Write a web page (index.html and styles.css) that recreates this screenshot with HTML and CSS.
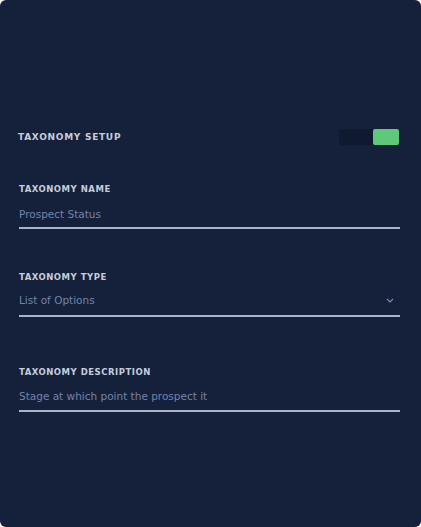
FILE: index.html
```html
<!DOCTYPE html>
<html lang="en">
<head>
    <meta charset="utf-8">
    <link rel="stylesheet" href="styles.css">
</head>
<body>
<div class="panel">
    <div class="setup">
        <h2>Taxonomy Setup</h2>
        <div class="toggle"><span class="off"></span><span class="on"></span></div>
    </div>

    <div class="field name">
        <label>Taxonomy Name</label>
        <div class="value">Prospect Status</div>
    </div>

    <div class="field type">
        <label>Taxonomy Type</label>
        <div class="value">List of Options
            <svg class="chev" width="8" height="5" viewBox="0 0 8 5"><path d="M1 1l3 3 3-3" fill="none" stroke="#7d8cb0" stroke-width="1.2"/></svg>
        </div>
    </div>

    <div class="field desc">
        <label>Taxonomy Description</label>
        <div class="value">Stage at which point the prospect it</div>
    </div>
</div>
</body>
</html>
```
FILE: styles.css
```css
html, body { margin: 0; background: #fff; }
body { font-family: "DejaVu Sans", sans-serif; }

.panel {
    width: 421px;
    height: 527px;
    box-sizing: border-box;
    background: #15213b;
    border-radius: 6px;
    padding: 129px 21px 0 18px;
}

.setup {
    display: flex;
    align-items: center;
    justify-content: space-between;
}
.setup h2 {
    margin: 0;
    font-size: 9px;
    font-weight: bold;
    text-transform: uppercase;
    letter-spacing: 0.08em;
    color: #c7cddb;
}
.toggle {
    display: flex;
    width: 60px;
    height: 16px;
    margin-right: 1px;
}
.toggle .off { flex: 34; background: #0f1a30; border-radius: 2px 0 0 2px; }
.toggle .on { flex: 26; background: #5fc97a; border-radius: 2px; }

.field label {
    display: block;
    font-size: 8.5px;
    font-weight: bold;
    text-transform: uppercase;
    letter-spacing: 0.06em;
    color: #c7cddb;
    padding-left: 1px;
}
.field .value {
    display: flex;
    justify-content: space-between;
    align-items: center;
    font-size: 10.5px;
    color: #7383aa;
    padding: 14px 0 7px;
    border-bottom: 2px solid #a9b3cc;
    margin-left: 1px;
}
.field .chev { margin-right: 6px; }

.name { margin-top: 39px; }
.type { margin-top: 43px; }
.type .value { padding: 12px 0 9px; }
.desc { margin-top: 50px; }
.desc .value { padding: 13px 0 8px; }
```
